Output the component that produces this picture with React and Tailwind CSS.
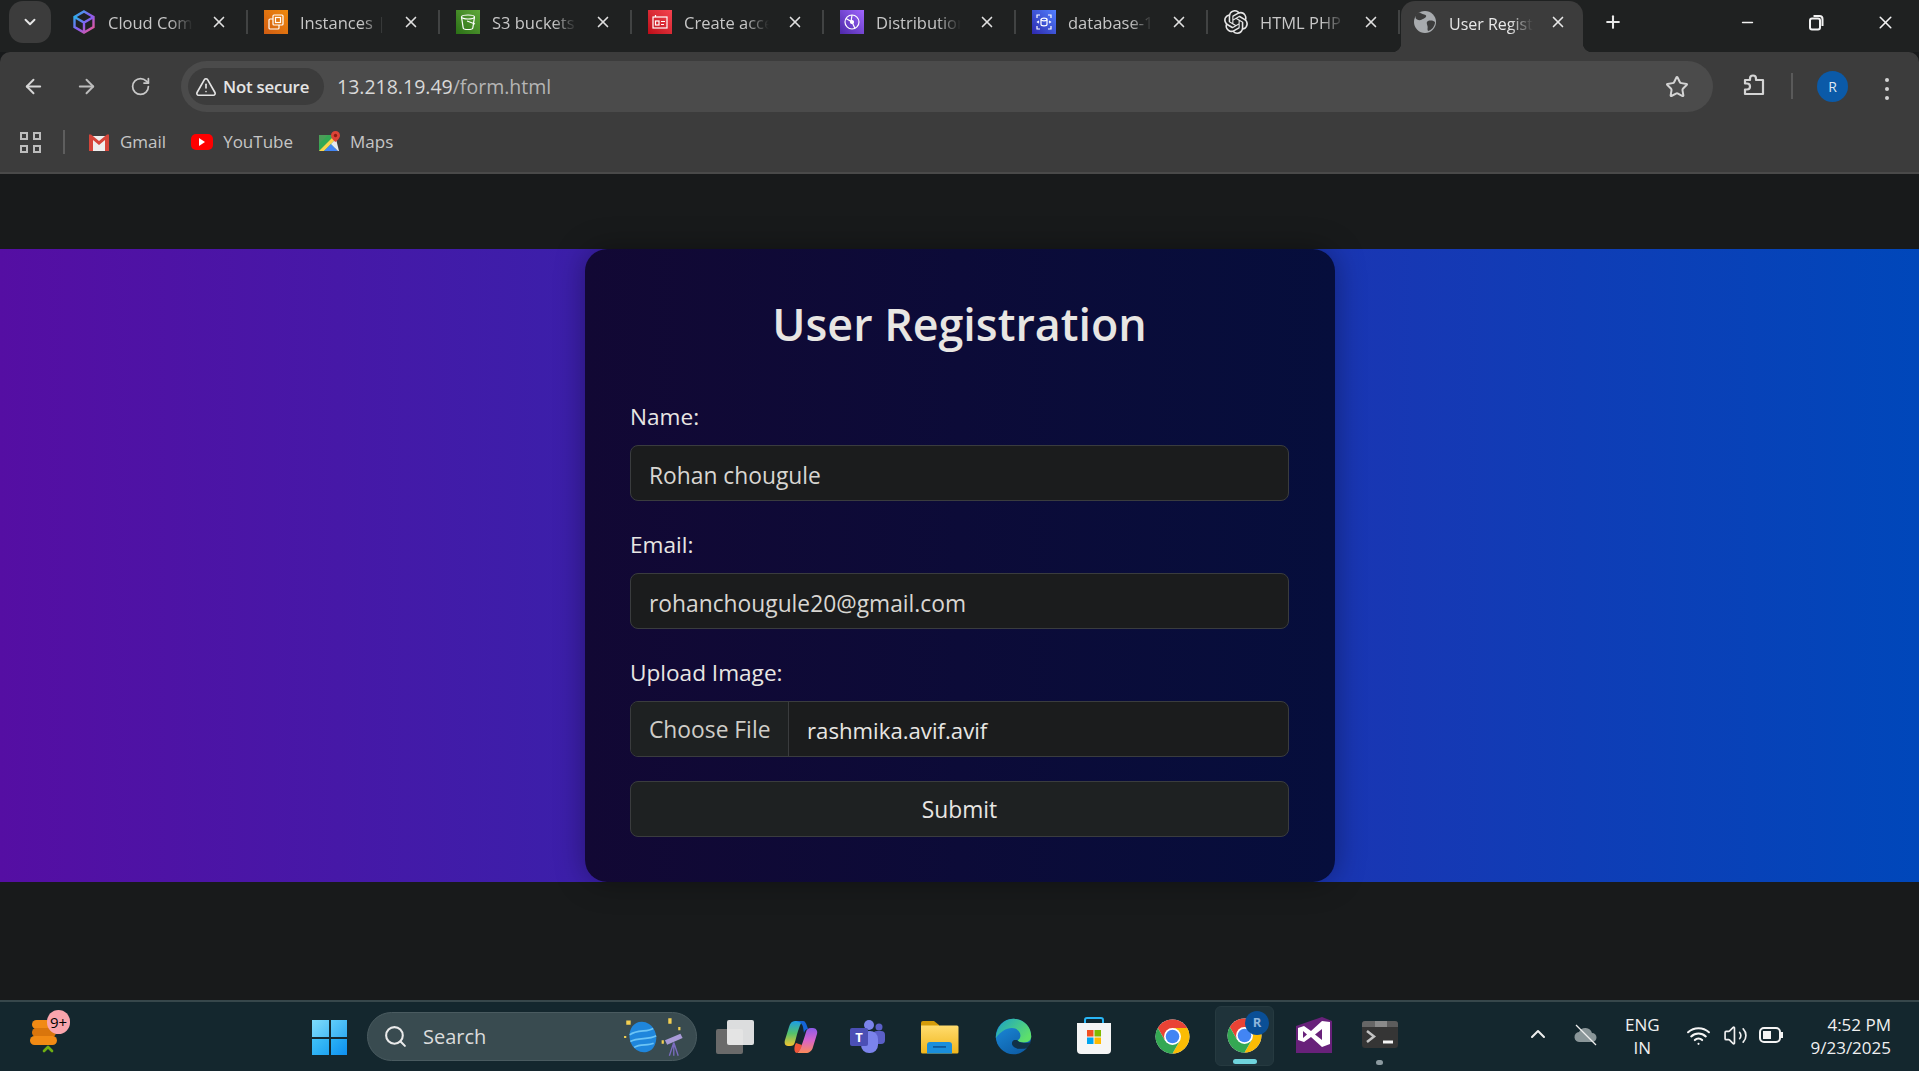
import React from 'react';
import { ArrowLeft, ArrowRight, ChevronDown, ChevronUp, Minus, Plus, RotateCw, Search, Star, TriangleAlert, Volume2, Wifi, X } from 'lucide-react';
import { SiOpenai } from 'react-icons/si';

const CloudIcon = () => (
  <svg width="24" height="24" viewBox="0 0 24 24" fill="none" strokeWidth="2.400">
    <defs>
      <linearGradient id="cc" x1="0" y1="0" x2="1" y2="1">
        <stop offset="0" stopColor="#21b8e8" />
        <stop offset="0.5" stopColor="#8a5cf0" />
        <stop offset="1" stopColor="#f0568a" />
      </linearGradient>
    </defs>
    <path d="M12 1.500l9.500 5.500v10L12 22.500 2.500 17V7z" stroke="url(#cc)" />
    <path d="M2.500 7L12 12.500 21.500 7M12 12.500v10" stroke="url(#cc)" />
  </svg>
);

const AwsTile = ({ from, to, children }) => (
  <div className={`w-6 h-6 flex items-center justify-center bg-linear-to-tr ${from} ${to}`}>
    <svg width="20" height="20" viewBox="0 0 20 20" fill="none" stroke="#fff" strokeWidth="1.200">
      {children}
    </svg>
  </div>
);

const Ec2Icon = () => (
  <AwsTile from="from-[#d05c12]" to="to-[#f08a0c]">
    <rect x="7" y="3" width="10" height="10" rx="1" />
    <rect x="9.500" y="5.500" width="5" height="5" />
    <path d="M7 7H4a1 1 0 0 0-1 1v8a1 1 0 0 0 1 1h8a1 1 0 0 0 1-1v-3" />
  </AwsTile>
);

const S3Icon = () => (
  <AwsTile from="from-[#2a7016]" to="to-[#60a83a]">
    <ellipse cx="10" cy="5" rx="6.500" ry="2" />
    <path d="M3.500 5l1.700 11c.1 1 2 1.500 4.800 1.500s4.700-.5 4.800-1.500L16.500 5" />
    <path d="M9 9l8 3" />
  </AwsTile>
);

const IamIcon = () => (
  <AwsTile from="from-[#bd0816]" to="to-[#f5424f]">
    <rect x="3" y="5" width="14" height="11" />
    <rect x="5.500" y="9" width="3.500" height="4" />
    <path d="M5.500 3v2M11 9.500h4M11 12.500h3" />
  </AwsTile>
);

const CloudFrontIcon = () => (
  <AwsTile from="from-[#4d27a8]" to="to-[#a166ff]">
    <circle cx="10" cy="10" r="7" />
    <circle cx="10" cy="10" r="1.500" fill="#fff" />
    <path d="M4 6.500l6 3.500 3 6.500M10 3l-1 7" />
  </AwsTile>
);

const RdsIcon = () => (
  <AwsTile from="from-[#2e27ad]" to="to-[#527fff]">
    <ellipse cx="10" cy="7.500" rx="3" ry="1.300" />
    <path d="M7 7.500v5c0 .7 1.300 1.300 3 1.300s3-.6 3-1.300v-5" />
    <path d="M3 6V3h3M17 6V3h-3M3 14v3h3M17 14v3h-3M5 9l-1.500 1L5 11M15 9l1.500 1L15 11" />
  </AwsTile>
);

const OpenAiIcon = () => <SiOpenai className="text-[#e6e6e6]" size={24} />;

const GlobeIcon = () => (
  <svg width="24" height="24" viewBox="0 0 24 24">
    <circle cx="12" cy="12" r="11" fill="#a8abae" />
    <path d="M7 2.500c2 2 5 1.500 6 3s-2 3-4 4-3 1-5 0-2-4 0-6zM15 11c3-1 6 0 7 1 0 4-3 8-7 9-1-2 0-3-.5-5s-1.500-4 .5-5z" fill="#3c3c3c" />
  </svg>
);

const GmailIcon = () => (
  <svg width="22" height="18" viewBox="0 0 22 18">
    <path d="M1 3h20v15H1z" fill="#eee" />
    <path d="M1 1.500v16.500h4V7l6 5 6-5v11h4V1.500h-2L11 8 3 1.500z" fill="#d5453a" />
  </svg>
);

const YouTubeIcon = () => (
  <div className="w-[22px] h-4 rounded-[5px] bg-[#f00] flex items-center justify-center">
    <svg width="8" height="8" viewBox="0 0 8 8"><path d="M1 0l6 4-6 4z" fill="#fff" /></svg>
  </div>
);

const MapsIcon = () => (
  <svg width="22" height="22" viewBox="0 0 22 22">
    <path d="M0 4h16v16H0z" fill="#34a853" />
    <path d="M0 20L16 4v5L5 20z" fill="#fbd44a" />
    <path d="M5 20L12 13l7 7z" fill="#4285f4" />
    <path d="M0 4h9L0 13z" fill="#4a9e58" />
    <path d="M12 13l5-5 3 12h-1z" fill="#e8eaed" />
    <path d="M16.500 0a4.500 4.500 0 0 1 4.500 4.500c0 3-4.500 6.500-4.500 6.500S12 7.500 12 4.500A4.500 4.500 0 0 1 16.500 0z" fill="#db4437" />
    <circle cx="16.500" cy="4.500" r="1.700" fill="#8c1c13" />
  </svg>
);

const PuzzleIcon = () => (
  <svg width="26" height="26" viewBox="0 0 26 26" fill="none" stroke="#d4d4d4" strokeWidth="2.200" strokeLinejoin="round">
    <path d="M4 7h5V5.500a3 3 0 0 1 6 0V7h7v14H4v-4.500h2a3 3 0 0 0 0-6H4z" />
  </svg>
);

const WindowsLogo = () => (
  <div className="grid grid-cols-2 gap-[2px] w-[35px] h-[35px]">
    <div className="bg-linear-to-br from-[#7ddcfc] to-[#4bbdf5]" />
    <div className="bg-linear-to-br from-[#5fcdfa] to-[#31abf2]" />
    <div className="bg-linear-to-br from-[#3fc1f8] to-[#1ea3f0]" />
    <div className="bg-linear-to-br from-[#2bb2f5] to-[#0e8ff0]" />
  </div>
);

const TaskView = () => (
  <div className="relative w-[38px] h-[34px]">
    <div className="absolute left-0 bottom-0 w-[27px] h-[25px] rounded-[2px] bg-[#6a6a6a]" />
    <div className="absolute right-0 top-0 w-[27px] h-[25px] rounded-[2px] bg-[#f2f2f2]/90" />
  </div>
);

const Copilot = () => (
  <svg width="36" height="34" viewBox="0 0 36 34">
    <defs>
      <linearGradient id="cp1" x1="0" y1="0" x2="0" y2="1">
        <stop offset="0" stopColor="#1b9de8" />
        <stop offset="0.500" stopColor="#55c26a" />
        <stop offset="1" stopColor="#f4c430" />
      </linearGradient>
      <linearGradient id="cp2" x1="0" y1="0" x2="0" y2="1">
        <stop offset="0" stopColor="#8c5be8" />
        <stop offset="0.500" stopColor="#d864c8" />
        <stop offset="1" stopColor="#fb8a5a" />
      </linearGradient>
    </defs>
    <path d="M12 1h8c-3 2-5 10-8 21-1 3-2 4-5 4H5c-3 0-4-3-3-6l4-13c1-4 3-6 6-6z" fill="url(#cp1)" />
    <path d="M23 33h-9c3-2 6-11 9-21 1-3 2-4 5-4h2c3 0 5 3 4 6l-4 13c-1 4-4 6-7 6z" fill="url(#cp2)" />
    <path d="M12 1h8c2 0 3 2 4 5l1 3c-2 0-3 1-4 4l-1-6c-1-4-4-6-8-6z" fill="#1565d8" />
    <path d="M14 33c3-2 4-5 5-8l-6-2-1 2c-1 3-1 8 2 8z" fill="#f0553a" />
  </svg>
);

const Teams = () => (
  <svg width="36" height="34" viewBox="0 0 36 34">
    <circle cx="29" cy="7" r="3.500" fill="#5b5fc7" />
    <rect x="23" y="11" width="12" height="13" rx="4" fill="#5b5fc7" />
    <circle cx="19" cy="5" r="5" fill="#7b83eb" />
    <rect x="11" y="11" width="17" height="22" rx="8" fill="#7b83eb" />
    <rect x="0" y="8" width="18" height="18" rx="2" fill="#4b4fb5" />
    <text x="9" y="22" textAnchor="middle" fontSize="13" fontWeight="700" fill="#fff" fontFamily="Open Sans, sans-serif">T</text>
  </svg>
);

const Explorer = () => (
  <svg width="38" height="34" viewBox="0 0 38 34">
    <path d="M0 3a2 2 0 0 1 2-2h11l5 4v6H0z" fill="#d39b0a" />
    <path d="M0 5.500h36a1.500 1.500 0 0 1 1.500 1.500v25a1.500 1.500 0 0 1-1.500 1.500H1.500A1.500 1.500 0 0 1 0 32z" fill="url(#ex)" />
    <defs>
      <linearGradient id="ex" x1="0" y1="0" x2="0" y2="1">
        <stop offset="0" stopColor="#ffdc6e" />
        <stop offset="1" stopColor="#f0b61c" />
      </linearGradient>
    </defs>
    <path d="M6 33.500V25a3 3 0 0 1 3-3h19a3 3 0 0 1 3 3v8.500z" fill="#1a8fdc" />
    <rect x="12" y="26" width="13" height="1.800" fill="#0d5a9c" />
  </svg>
);

const Edge = () => (
  <svg width="37" height="37" viewBox="0 0 48 48">
    <defs>
      <linearGradient id="ed1" x1="0" y1="0" x2="1" y2="0.600">
        <stop offset="0" stopColor="#1aa0c8" />
        <stop offset="1" stopColor="#5ee06a" />
      </linearGradient>
      <linearGradient id="ed2" x1="0" y1="0" x2="0.600" y2="1">
        <stop offset="0" stopColor="#1d8fe0" />
        <stop offset="1" stopColor="#0e5fa8" />
      </linearGradient>
    </defs>
    <circle cx="24" cy="24" r="23" fill="url(#ed2)" />
    <path d="M24 1C37 1 47 11 47 24c0 5-4 8-10 8-4 0-7-1-8-3 2-1 4-3 4-6 0-6-5-10-11-10-8 0-15 5-21 13C2 12 11 1 24 1z" fill="url(#ed1)" />
    <path d="M47 32c-3 5-10 8-15 8-8 0-12-6-9-10 1-1 3-2 6-1 1 2 4 3 8 3 4 0 7-1 10 0z" fill="#0b4f96" />
    <path d="M48 30c-2 2-6 3-11 2-4 0-7-1-8-3-3-1-5 0-6 1-3 4 1 10 9 10 5 0 14 1 17-10z" fill="#14272e" opacity="0.750" />
  </svg>
);

const Store = () => (
  <svg width="36" height="38" viewBox="0 0 36 38">
    <path d="M9 8V3a2 2 0 0 1 2-2h14a2 2 0 0 1 2 2v5" fill="none" stroke="#29b6f6" strokeWidth="2" />
    <path d="M1 6h34v27a4 4 0 0 1-4 4H5a4 4 0 0 1-4-4z" fill="#f5f5f5" />
    <rect x="11" y="13" width="6.500" height="6.500" fill="#f25022" />
    <rect x="18.500" y="13" width="6.500" height="6.500" fill="#7fba00" />
    <rect x="11" y="20.500" width="6.500" height="6.500" fill="#00a4ef" />
    <rect x="18.500" y="20.500" width="6.500" height="6.500" fill="#ffb900" />
  </svg>
);

const Chrome = () => (
  <svg width="37" height="37" viewBox="0 0 48 48">
    <circle cx="24" cy="24" r="22" fill="#fff" />
    <path d="M4.950 13A22 22 0 0 1 43.050 13L24 13 14.470 29.500Z" fill="#ea4335" />
    <path d="M43.050 13A22 22 0 0 1 24 46L33.530 29.500 24 13Z" fill="#fbbc04" />
    <path d="M24 46A22 22 0 0 1 4.950 13L14.470 29.500 33.530 29.500Z" fill="#34a853" />
    <circle cx="24" cy="24" r="11" fill="#fff" />
    <circle cx="24" cy="24" r="8.800" fill="#4285f4" />
  </svg>
);

const VisualStudio = () => (
  <svg width="36" height="36" viewBox="0 0 36 36">
    <path d="M0 9L26 0l10 4v32L0 36z" fill="#68217a" />
    <path d="M2 11l6-2 7 5L26 4l8 1v22l-8 3-11-10-7 5-6-2zM7 14v7l4-3.500zM26 12l-7 5.500 7 5.500z" fill="#fff" fillRule="evenodd" />
  </svg>
);

const Terminal = () => (
  <div className="w-[36px] h-[27px] rounded-[3px] bg-[#353535] relative overflow-hidden">
    <div className="h-[6px] flex">
      <div className="w-[13px] bg-[#666]" />
      <div className="w-[12px] bg-[#8a8a8a]" />
      <div className="flex-1 bg-[#5c5c5c]" />
    </div>
    <svg className="absolute left-[4px] top-[8px]" width="28" height="16" viewBox="0 0 28 16" fill="none">
      <path d="M1 2l7 5.500L1 13" stroke="#c4c4c4" strokeWidth="2.500" />
      <path d="M17 13h10" stroke="#f4f4f4" strokeWidth="3" />
    </svg>
  </div>
);

const Widget = () => (
  <div className="relative w-[40px] h-[46px]">
    <div className="absolute left-[2px] top-[10px] w-[26px] h-[9px] rounded-full bg-[#f18a14]" />
    <div className="absolute left-[2px] top-[18px] w-[24px] h-[9px] rounded-full bg-[#d9750c]" />
    <div className="absolute left-0 top-[26px] w-[27px] h-[9px] rounded-full bg-[#f18a14]" />
    <div className="absolute left-[17px] top-0 w-[23px] h-[24px] rounded-full bg-[#f9a5ad] text-black text-[15px] leading-[24px] text-center">9+</div>
    <ChevronUp className="absolute left-[10px] top-[31px] text-[#6fae12]" size={16} strokeWidth={4} />
  </div>
);

const SearchArt = () => (
  <svg width="66" height="42" viewBox="0 0 58 38">
    <g transform="rotate(-15 18 19)">
      <ellipse cx="18" cy="19" rx="12" ry="14" fill="#1f86dc" />
      <path d="M7 14c8-3 16 2 22 0M6 20c8-2 16 3 24 1M8 26c6-2 12 2 18 1" stroke="#6cc4f5" strokeWidth="1.500" fill="none" />
    </g>
    <path d="M38 22l14-6 2 4-14 6z" fill="#a99bd8" />
    <path d="M46 24l-4 12M46 24l4 12M46 24v12" stroke="#7b6cc0" strokeWidth="1.200" />
    <path d="M3 4h4v4H3zM41 2h3v5h-3zM50 10h2v3h-2zM35 22h2v3h-2zM1 18h2v2H1z" fill="#f3cf52" />
  </svg>
);

const tabs = [
  { title: 'Cloud Computing', icon: <CloudIcon /> },
  { title: 'Instances | EC2', icon: <Ec2Icon /> },
  { title: 'S3 buckets', icon: <S3Icon /> },
  { title: 'Create access', icon: <IamIcon /> },
  { title: 'Distributions', icon: <CloudFrontIcon /> },
  { title: 'database-1', icon: <RdsIcon /> },
  { title: 'HTML PHP', icon: <OpenAiIcon /> },
];

const Tab = ({ title, icon }) => (
  <div className="w-[192px] h-[44px] flex items-center shrink-0 pl-[17px] relative">
    {icon}
    <span className="ml-[12px] mt-[3px] w-[85px] whitespace-nowrap overflow-hidden text-[16.500px] text-[#c7c7c7] [mask-image:linear-gradient(to_right,black_72%,transparent)]">
      {title}
    </span>
    <X className="ml-[17px] text-[#e0e0e0]" size={18} strokeWidth={2.200} />
    <div className="absolute -right-[1px] top-[10px] w-[2px] h-[24px] bg-[#414343]" />
  </div>
);

const TabStrip = () => (
  <div className="h-[52px] bg-[#1f2121] flex items-start shrink-0">
    <div className="ml-[9px] mt-[1px] w-[42px] h-[42px] rounded-[14px] bg-[#3c3c3c] flex items-center justify-center shrink-0">
      <ChevronDown className="text-[#e6e6e6]" size={18} strokeWidth={2.500} />
    </div>
    <div className="ml-[4px] flex">
      {tabs.map((t) => (
        <Tab key={t.title} title={t.title} icon={t.icon} />
      ))}
    </div>
    {/* Active tab */}
    <div className="relative ml-[2px] mt-[1px] w-[182px] h-[51px] rounded-t-[14px] bg-[#3c3c3c] flex items-start pt-[9px] pl-[12px] shrink-0">
      <div className="absolute -left-[9px] bottom-0 w-[9px] h-[9px] bg-[radial-gradient(circle_at_0_0,transparent_9px,#3c3c3c_9.500px)]" />
      <div className="absolute -right-[9px] bottom-0 w-[9px] h-[9px] bg-[radial-gradient(circle_at_100%_0,transparent_9px,#3c3c3c_9.500px)]" />
      <GlobeIcon />
      <span className="ml-[12px] mt-[2px] w-[84px] whitespace-nowrap overflow-hidden text-[16px] text-[#e8e8e8] [mask-image:linear-gradient(to_right,black_72%,transparent)]">
        User Registration
      </span>
      <X className="ml-[16px] mt-[3px] text-[#e8e8e8]" size={18} strokeWidth={2.200} />
    </div>
    <Plus className="ml-[20px] mt-[12px] text-[#e8e8e8]" size={20} strokeWidth={2.500} />
    <div className="ml-auto flex items-center h-[44px] pr-[23px] text-[#f2f2f2]">
      <Minus size={17} strokeWidth={2} />
      <svg className="ml-[52px]" width="17" height="17" viewBox="0 0 17 17" fill="none" stroke="currentColor" strokeWidth="2">
        <rect x="2" y="4.500" width="10" height="11" rx="2" />
        <path d="M5.500 2h6a3 3 0 0 1 3 3v7" />
      </svg>
      <X className="ml-[50px]" size={21} strokeWidth={1.800} />
    </div>
  </div>
);

const Toolbar = () => (
  <div className="h-[122px] shrink-0 bg-[#3c3c3c] rounded-t-[10px] border-b-2 border-[#4a4a4a] flex flex-col">
    <div className="h-[66px] pt-[9px] flex items-start">
      <ArrowLeft className="ml-[22px] mt-[14px] text-[#d6d6d6]" size={23} strokeWidth={2} />
      <ArrowRight className="ml-[30px] mt-[14px] text-[#bdbdbd]" size={23} strokeWidth={2} />
      <RotateCw className="ml-[32px] mt-[15px] text-[#c8c8c8]" size={21} strokeWidth={2} />
      <div className="ml-[30px] w-[1532px] h-[51px] rounded-full bg-[#4b4b4b] flex items-center pl-[7px] pr-[24px]">
        <div className="w-[136px] h-[37px] rounded-full bg-[#3c3c3c] flex items-center pl-[7px]">
          <TriangleAlert className="text-[#e4e4e4]" size={22} strokeWidth={1.800} />
          <span className="ml-[6px] text-[16.800px] font-semibold text-[#e4e4e4] whitespace-nowrap tracking-[-0.2px]">Not secure</span>
        </div>
        <span className="ml-[13px] text-[19.500px] text-[#d8d8d8] whitespace-nowrap">
          13.218.19.49<span className="text-[#b5b5b5]">/form.html</span>
        </span>
        <Star className="ml-auto text-[#d4d4d4]" size={24} strokeWidth={2} />
      </div>
      <div className="ml-[28px] mt-[12px]"><PuzzleIcon /></div>
      <div className="ml-[24px] mt-[12px] w-[2px] h-[26px] bg-[#5a5a5a]" />
      <div className="ml-[24px] mt-[10px] w-[31px] h-[31px] rounded-full bg-[#0b5aa8] text-[#dfe8f2] text-[14px] flex items-center justify-center">R</div>
      <div className="ml-[37px] mt-[17px] flex flex-col gap-[5px]">
        <div className="w-[4px] h-[4px] rounded-full bg-[#d4d4d4]" />
        <div className="w-[4px] h-[4px] rounded-full bg-[#d4d4d4]" />
        <div className="w-[4px] h-[4px] rounded-full bg-[#d4d4d4]" />
      </div>
    </div>
    <div className="flex items-center h-[48px] pl-[20px] text-[17px] text-[#c6c6c6]">
      <div className="grid grid-cols-2 gap-[5px]">
        <div className="w-[8px] h-[8px] border-2 border-[#bdbdbd]" />
        <div className="w-[8px] h-[8px] border-2 border-[#bdbdbd]" />
        <div className="w-[8px] h-[8px] border-2 border-[#bdbdbd]" />
        <div className="w-[8px] h-[8px] border-2 border-[#bdbdbd]" />
      </div>
      <div className="ml-[22px] w-[2px] h-[24px] bg-[#5e5e5e]" />
      <div className="ml-[23px] flex items-center gap-[10px]"><GmailIcon /><span>Gmail</span></div>
      <div className="ml-[25px] flex items-center gap-[10px]"><YouTubeIcon /><span>YouTube</span></div>
      <div className="ml-[26px] flex items-center gap-[9px]"><MapsIcon /><span>Maps</span></div>
    </div>
  </div>
);

const Field = ({ label, value }) => (
  <div className="mb-[27px]">
    <label className="block pt-[2px] h-[32px] text-[22.600px] leading-[30px] text-[#e8e6e3] mb-[13px]">{label}</label>
    <input
      readOnly
      value={value}
      className="w-full h-[56px] px-[18px] pt-[4px] rounded-[8px] bg-[#1b1c1d] border border-[#3a3c3e] text-[#d8d6d2] text-[22.800px] outline-none"
    />
  </div>
);

const RegistrationForm = () => (
  <div className="w-[750px] h-[633px] rounded-[22px] bg-linear-to-r/srgb from-[#120834] to-[#060e3c] px-[45.500px] pt-[45px] shadow-[0_0_30px_rgba(0,0,0,0.35)]">
    <h2 className="text-[44.800px] leading-[60px] font-semibold text-center text-[#e8e6e3]">User Registration</h2>
    <div className="mt-[46px]">
      <Field label="Name:" value="Rohan chougule" />
      <Field label="Email:" value="rohanchougule20@gmail.com" />
      <label className="block pt-[2px] h-[32px] text-[22.600px] leading-[30px] text-[#e8e6e3] mb-[13px]">Upload Image:</label>
      <div className="h-[56px] flex items-stretch rounded-[8px] bg-[#1b1c1d] border border-[#3a3c3e] text-[22.800px] overflow-hidden">
        <div className="w-[158px] pt-[3px] bg-[#1e2122] border-r border-[#3a3c3e] text-[#cfcdc8] flex items-center pl-[18px] whitespace-nowrap">Choose File</div>
        <div className="pl-[18px] pt-[3px] text-[#e8e6e3] flex items-center text-[22.200px]">rashmika.avif.avif</div>
      </div>
      <button className="mt-[24px] w-full h-[56px] pt-[3px] rounded-[8px] bg-[#1e2122] border border-[#3a3c3e] text-[#e8e6e3] text-[22.800px]">Submit</button>
    </div>
  </div>
);

const Taskbar = () => (
  <div className="h-[71px] shrink-0 bg-[#14272e] border-t-2 border-[#37474b] flex items-start relative">
    <div className="absolute left-[30px] top-[8px]"><Widget /></div>
    <div className="ml-[312px] mt-[18px]"><WindowsLogo /></div>
    <div className="ml-[20px] mt-[10px] w-[330px] h-[49px] rounded-full bg-[#394b50] border border-[#4a5b60] flex items-center pl-[15px] pr-[8px]">
      <Search className="text-[#eaeaea]" size={25} strokeWidth={2} />
      <span className="ml-[15px] text-[20px] text-[#dcdcdc]">Search</span>
      <div className="ml-auto"><SearchArt /></div>
    </div>
    <div className="ml-[19px] mt-[18px]"><TaskView /></div>
    <div className="ml-[29px] mt-[18px]"><Copilot /></div>
    <div className="ml-[31px] mt-[18px]"><Teams /></div>
    <div className="ml-[35px] mt-[18px]"><Explorer /></div>
    <div className="ml-[36px] mt-[16px]"><Edge /></div>
    <div className="ml-[44px] mt-[15px]"><Store /></div>
    <div className="ml-[42px] mt-[16px]"><Chrome /></div>
    {/* Active Chrome */}
    <div className="relative ml-[24px] mt-[4px] w-[59px] h-[60px] rounded-[6px] bg-[#1f333a] border border-[#263a40] flex items-center justify-center">
      <div className="-mt-[2px]"><Chrome /></div>
      <div className="absolute right-[4px] top-[4px] w-[24px] h-[24px] rounded-full bg-[#0a4f96] text-[#8fb6dc] text-[13px] font-bold flex items-center justify-center">R</div>
      <div className="absolute left-[17px] bottom-[1px] w-[24px] h-[5px] rounded-full bg-[#6fd3dc]" />
    </div>
    <div className="ml-[22px] mt-[15px]"><VisualStudio /></div>
    <div className="relative ml-[30px] mt-[19px]">
      <Terminal />
      <div className="absolute left-[14px] top-[39px] w-[7px] h-[5px] rounded-full bg-[#8c9aa0]" />
    </div>
    <ChevronUp className="ml-[128px] mt-[20px] text-[#eee]" size={24} strokeWidth={2} />
    <svg className="ml-[23px] mt-[22px]" width="26" height="22" viewBox="0 0 26 22">
      <path d="M7 18a5 5 0 0 1-1-10 7 7 0 0 1 13 1 4.500 4.500 0 0 1 0 9z" fill="#8a9699" />
      <path d="M3 1l20 20" stroke="#eee" strokeWidth="1.300" />
    </svg>
    <div className="ml-[26px] mt-[11px] text-[17px] leading-[23px] text-center text-[#f0f0f0]">
      <div>ENG</div>
      <div>IN</div>
    </div>
    <Wifi className="ml-[26px] mt-[21px] text-[#f4f4f4]" size={25} strokeWidth={2} />
    <Volume2 className="ml-[12px] mt-[21px] text-[#f0f0f0]" size={25} strokeWidth={1.600} />
    <svg className="ml-[11px] mt-[23px]" width="25" height="20" viewBox="0 0 25 20" fill="none">
      <rect x="1" y="3" width="20" height="14" rx="4" stroke="#f4f4f4" strokeWidth="2" />
      <rect x="4" y="6" width="8" height="8" fill="#f4f4f4" />
      <rect x="22" y="7" width="2" height="6" fill="#f4f4f4" />
    </svg>
    <div className="ml-auto mr-[28px] mt-[11px] text-[17px] leading-[23px] text-right text-[#f0f0f0]">
      <div>4:52 PM</div>
      <div>9/23/2025</div>
    </div>
  </div>
);

const App = () => (
  <div className="w-[1919px] h-[1071px] flex flex-col overflow-hidden bg-[#181a1b] font-['Open_Sans',sans-serif]">
    <TabStrip />
    <Toolbar />
    <div className="flex-1 flex flex-col">
      <div className="h-[75px] shrink-0" />
      <div className="h-[633px] shrink-0 flex justify-center bg-linear-to-r/srgb from-[#550ea3] to-[#0047ba]">
        <RegistrationForm />
      </div>
    </div>
    <Taskbar />
  </div>
);

export default App;
